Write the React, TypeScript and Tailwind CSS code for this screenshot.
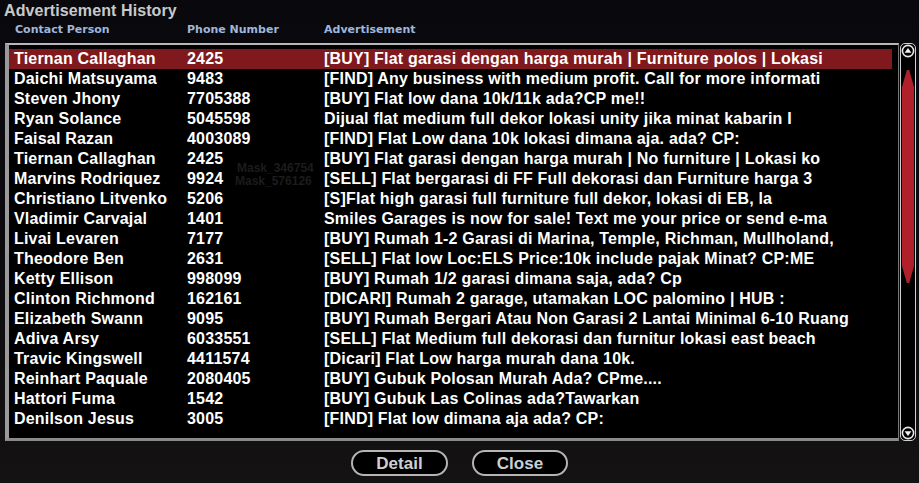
import React from "react";

interface Ad {
  name: string;
  phone: string;
  text: string;
}

const ads: Ad[] = [
  { name: "Tiernan Callaghan", phone: "2425", text: "[BUY] Flat garasi dengan harga murah | Furniture polos | Lokasi" },
  { name: "Daichi Matsuyama", phone: "9483", text: "[FIND] Any business with medium profit. Call for more informati" },
  { name: "Steven Jhony", phone: "7705388", text: "[BUY] Flat low dana 10k/11k ada?CP me!!" },
  { name: "Ryan Solance", phone: "5045598", text: "Dijual flat medium full dekor lokasi unity jika minat kabarin I" },
  { name: "Faisal Razan", phone: "4003089", text: "[FIND] Flat Low dana 10k lokasi dimana aja. ada? CP:" },
  { name: "Tiernan Callaghan", phone: "2425", text: "[BUY] Flat garasi dengan harga murah | No furniture | Lokasi ko" },
  { name: "Marvins Rodriquez", phone: "9924", text: "[SELL] Flat bergarasi di FF Full dekorasi dan Furniture harga 3" },
  { name: "Christiano Litvenko", phone: "5206", text: "[S]Flat high garasi full furniture full dekor, lokasi di EB, la" },
  { name: "Vladimir Carvajal", phone: "1401", text: "Smiles Garages is now for sale! Text me your price or send e-ma" },
  { name: "Livai Levaren", phone: "7177", text: "[BUY] Rumah 1-2 Garasi di Marina, Temple, Richman, Mullholand," },
  { name: "Theodore Ben", phone: "2631", text: "[SELL] Flat low Loc:ELS Price:10k include pajak Minat? CP:ME" },
  { name: "Ketty Ellison", phone: "998099", text: "[BUY] Rumah 1/2 garasi dimana saja, ada? Cp" },
  { name: "Clinton Richmond", phone: "162161", text: "[DICARI] Rumah 2 garage, utamakan LOC palomino | HUB :" },
  { name: "Elizabeth Swann", phone: "9095", text: "[BUY] Rumah Bergari Atau Non Garasi 2 Lantai Minimal 6-10 Ruang" },
  { name: "Adiva Arsy", phone: "6033551", text: "[SELL] Flat Medium full dekorasi dan furnitur lokasi east beach" },
  { name: "Travic Kingswell", phone: "4411574", text: "[Dicari] Flat Low harga murah dana 10k." },
  { name: "Reinhart Paquale", phone: "2080405", text: "[BUY] Gubuk Polosan Murah Ada? CPme...." },
  { name: "Hattori Fuma", phone: "1542", text: "[BUY] Gubuk Las Colinas ada?Tawarkan" },
  { name: "Denilson Jesus", phone: "3005", text: "[FIND] Flat low dimana aja ada? CP:" },
];

function ScrollArrow({ down }: { down?: boolean }) {
  return (
    <svg width="14" height="14" viewBox="0 0 14 14" className="block">
      <circle cx="7" cy="7" r="5.6" fill="#000" stroke="#e8e8e8" strokeWidth="1.6" />
      {down ? (
        <polygon points="3.6,5.2 10.4,5.2 7,10" fill="#f2f2f2" />
      ) : (
        <polygon points="3.6,8.8 10.4,8.8 7,4" fill="#f2f2f2" />
      )}
    </svg>
  );
}

export default function App() {
  return (
    <div
      className="w-[919px] h-[483px] overflow-hidden bg-gradient-to-b from-[#09090d] via-[#0b0a0d] to-[#141212] flex flex-col"
      style={{ fontFamily: '"Liberation Sans", Arial, sans-serif' }}
    >
      <div className="h-[23px] pl-[4px] pt-[1px] text-[16px] leading-[20px] text-[#c9c9c9] font-bold tracking-[0.1px]">
        Advertisement History
      </div>

      <div className="flex h-[20px] items-start text-[11px] leading-[14px] font-bold text-[#9fb6dc]" style={{ fontFamily: '"DejaVu Sans", sans-serif' }}>
        <span className="w-[187px] pl-[15px]">Contact Person</span>
        <span className="w-[137px]">Phone Number</span>
        <span>Advertisement</span>
      </div>

      <div className="flex h-[398px] pl-[5px] pr-[3px]">
        <div className="relative flex-1 border-t-[2px] border-l-[4px] border-b-[3px] border-r-[1px] border-t-[#b8b8b8] border-l-[#9a9a9a] border-b-[#8a8a8a] border-r-[#777] bg-black pt-[4px] pr-[6px]">
          <div className="absolute left-[226px] top-[117px] text-[12px] leading-[13px] font-bold text-[#1c1c1c] select-none">
            <div className="pl-[2px]">Mask_346754</div>
            <div>Mask_576126</div>
          </div>
          {ads.map((ad, i) => (
            <div
              key={i}
              className={`relative flex h-[20px] items-center text-[16px] tracking-[0.2px] font-bold text-white whitespace-nowrap overflow-hidden ${i === 0 ? "bg-[#7f191d]" : ""}`}
            >
              <span className="w-[178px] shrink-0 pl-[5px]">{ad.name}</span>
              <span className="w-[137px] shrink-0">{ad.phone}</span>
              <span>{ad.text}</span>
            </div>
          ))}
        </div>
        <div className="ml-[1px] w-[16px] flex flex-col items-center rounded-[5px] border border-[#d0d0d0] bg-black">
          <ScrollArrow />
          <div className="mt-[12px] w-[12px] h-[213px] bg-[#b0202b] [clip-path:polygon(40%_0,60%_0,100%_8%,100%_92%,60%_100%,40%_100%,0_92%,0_8%)]" />
          <div className="flex-1" />
          <ScrollArrow down />
        </div>
      </div>

      <div className="flex justify-center gap-[24px] pt-[9px]">
        <button className="w-[97px] h-[26px] rounded-full border-2 border-[#b5b5b5] bg-black text-[#cfcfcf] text-[17px] font-bold leading-none">
          Detail
        </button>
        <button className="w-[96px] h-[26px] rounded-full border-2 border-[#b5b5b5] bg-black text-[#cfcfcf] text-[17px] font-bold leading-none">
          Close
        </button>
      </div>
    </div>
  );
}
